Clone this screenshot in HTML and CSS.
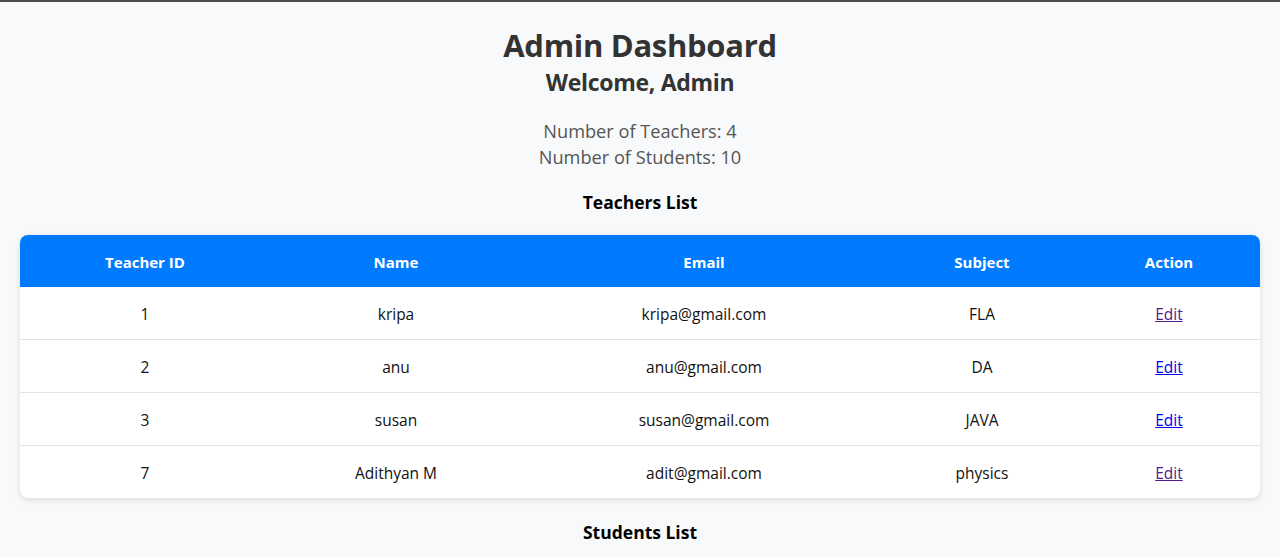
FILE: index.html
```html
<!DOCTYPE html>
<html>
<head>
<meta charset="utf-8">
<title>Admin Dashboard</title>
<link rel="stylesheet" href="styles.css">
</head>
<body>
<div class="page">
  <h1 class="title">Admin Dashboard</h1>
  <h2 class="welcome">Welcome, Admin</h2>
  <div class="stats">
    <p>Number of Teachers: 4</p>
    <p>Number of Students: 10</p>
  </div>
  <h3 class="section">Teachers List</h3>
  <table class="grid">
    <thead>
      <tr><th class="c1">Teacher ID</th><th class="c2">Name</th><th class="c3">Email</th><th class="c4">Subject</th><th class="c5">Action</th></tr>
    </thead>
    <tbody>
      <tr><td>1</td><td>kripa</td><td>kripa@gmail.com</td><td>FLA</td><td><a class="visited" href="#">Edit</a></td></tr>
      <tr><td>2</td><td>anu</td><td>anu@gmail.com</td><td>DA</td><td><a class="link" href="#">Edit</a></td></tr>
      <tr><td>3</td><td>susan</td><td>susan@gmail.com</td><td>JAVA</td><td><a class="link" href="#">Edit</a></td></tr>
      <tr><td>7</td><td>Adithyan M</td><td>adit@gmail.com</td><td>physics</td><td><a class="visited" href="#">Edit</a></td></tr>
    </tbody>
  </table>
  <h3 class="section students">Students List</h3>
</div>
</body>
</html>
```
FILE: styles.css
```css
html, body {
  margin: 0;
  padding: 0;
}
body {
  background: #f8f9fa;
  border-top: 2px solid #4a4a4a;
  font-family: "Segoe UI", "Open Sans", "Noto Sans", sans-serif;
  color: #333;
}
.page {
  padding: 0 20px;
  text-align: center;
}
.title {
  margin: 24px 0 0;
  font-size: 31px;
  line-height: 38px;
  font-weight: 700;
  color: #333;
  letter-spacing: -0.3px;
}
.welcome {
  margin: 4px 0 0;
  font-size: 23px;
  line-height: 29px;
  font-weight: 700;
  color: #333;
  letter-spacing: -0.3px;
}
.stats {
  margin-top: 21px;
  color: #555;
  font-size: 18.2px;
  line-height: 26px;
}
.stats p {
  margin: 0;
}
.section {
  margin: 21px 0 0;
  font-size: 17.5px;
  line-height: 22px;
  font-weight: 700;
  color: #000;
}
.grid {
  margin-top: 22px;
  width: 100%;
  border-collapse: separate;
  border-spacing: 0;
  background: #fff;
  border-radius: 8px;
  overflow: hidden;
  box-shadow: 0 2px 6px rgba(0,0,0,0.12);
  font-size: 15.5px;
  table-layout: fixed;
}
.grid th,
.grid td {
  box-sizing: border-box;
}
.grid th {
  background: #007bff;
  color: #fff;
  font-weight: 700;
  font-size: 15px;
  height: 52px;
  padding: 1px 10px 0;
}
.grid td {
  height: 53px;
  padding: 1px 10px 0;
  color: #111;
  border-top: 1px solid #e2e2e2;
}
.grid tbody tr:first-child td {
  border-top: 0;
  height: 52px;
}
.c1 { width: 250px; }
.c2 { width: 252px; }
.c3 { width: 364px; }
.c4 { width: 192px; }
.c5 { width: 182px; }
.link { color: #0000ee; }
.visited { color: #551a8b; }
.students {
  margin-top: 23px;
}
```
